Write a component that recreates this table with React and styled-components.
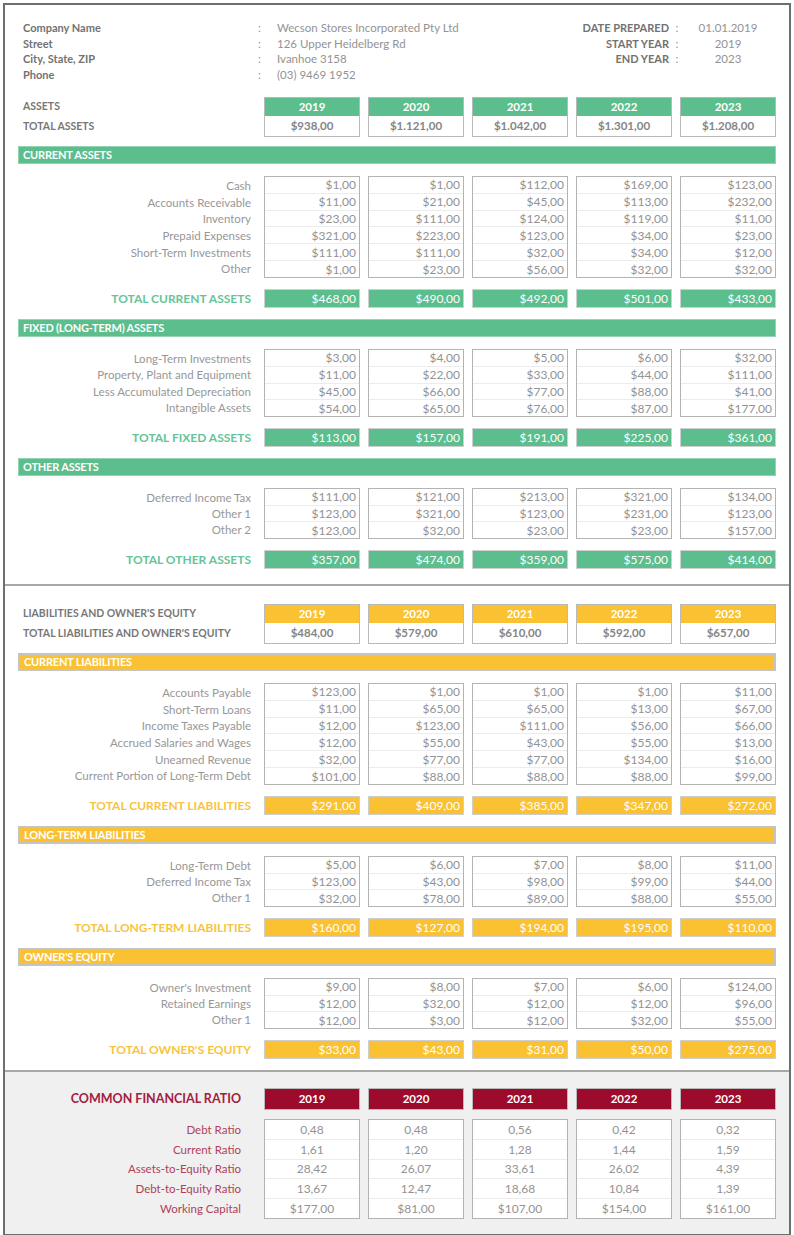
import React from 'react';
import styled, { createGlobalStyle } from 'styled-components';

const GlobalStyle = createGlobalStyle`
  body {
    margin: 0;
    background: #fff;
  }
`;

// colour sets for each part of the sheet
const tones = {
  green: { main: '#5cbd8d', label: '#66c498', edge: '#94d3b2' },
  yellow: { main: '#fac132', label: '#f8c43f', edge: '#c4c4c4' },
  maroon: { main: '#9c0a2c', label: '#a3203f', edge: '#b9b9b9' },
};

const years = ['2019', '2020', '2021', '2022', '2023'];

const money = (n) =>
  n >= 1000 ? `$${Math.floor(n / 1000)}.${String(n % 1000).padStart(3, '0')},00` : `$${n},00`;

const assets = {
  totals: [938, 1121, 1042, 1301, 1208],
  sections: [
    {
      title: 'Current Assets',
      total: 'Total Current Assets',
      sums: [468, 490, 492, 501, 433],
      rows: [
        ['Cash', [1, 1, 112, 169, 123]],
        ['Accounts Receivable', [11, 21, 45, 113, 232]],
        ['Inventory', [23, 111, 124, 119, 11]],
        ['Prepaid Expenses', [321, 223, 123, 34, 23]],
        ['Short-Term Investments', [111, 111, 32, 34, 12]],
        ['Other', [1, 23, 56, 32, 32]],
      ],
    },
    {
      title: 'Fixed (Long-Term) Assets',
      total: 'Total Fixed Assets',
      sums: [113, 157, 191, 225, 361],
      rows: [
        ['Long-Term Investments', [3, 4, 5, 6, 32]],
        ['Property, Plant and Equipment', [11, 22, 33, 44, 111]],
        ['Less Accumulated Depreciation', [45, 66, 77, 88, 41]],
        ['Intangible Assets', [54, 65, 76, 87, 177]],
      ],
    },
    {
      title: 'Other Assets',
      total: 'Total Other Assets',
      sums: [357, 474, 359, 575, 414],
      rows: [
        ['Deferred Income Tax', [111, 121, 213, 321, 134]],
        ['Other 1', [123, 321, 123, 231, 123]],
        ['Other 2', [123, 32, 23, 23, 157]],
      ],
    },
  ],
};

const liabilities = {
  totals: [484, 579, 610, 592, 657],
  sections: [
    {
      title: 'Current Liabilities',
      total: 'Total Current Liabilities',
      sums: [291, 409, 385, 347, 272],
      rows: [
        ['Accounts Payable', [123, 1, 1, 1, 11]],
        ['Short-Term Loans', [11, 65, 65, 13, 67]],
        ['Income Taxes Payable', [12, 123, 111, 56, 66]],
        ['Accrued Salaries and Wages', [12, 55, 43, 55, 13]],
        ['Unearned Revenue', [32, 77, 77, 134, 16]],
        ['Current Portion of Long-Term Debt', [101, 88, 88, 88, 99]],
      ],
    },
    {
      title: 'Long-Term Liabilities',
      total: 'Total Long-Term Liabilities',
      sums: [160, 127, 194, 195, 110],
      rows: [
        ['Long-Term Debt', [5, 6, 7, 8, 11]],
        ['Deferred Income Tax', [123, 43, 98, 99, 44]],
        ['Other 1', [32, 78, 89, 88, 55]],
      ],
    },
    {
      title: "Owner's Equity",
      total: "Total Owner's Equity",
      sums: [33, 43, 31, 50, 275],
      rows: [
        ["Owner's Investment", [9, 8, 7, 6, 124]],
        ['Retained Earnings', [12, 32, 12, 12, 96]],
        ['Other 1', [12, 3, 12, 32, 55]],
      ],
    },
  ],
};

const ratios = [
  ['Debt Ratio', ['0,48', '0,48', '0,56', '0,42', '0,32']],
  ['Current Ratio', ['1,61', '1,20', '1,28', '1,44', '1,59']],
  ['Assets-to-Equity Ratio', ['28,42', '26,07', '33,61', '26,02', '4,39']],
  ['Debt-to-Equity Ratio', ['13,67', '12,47', '18,68', '10,84', '1,39']],
  ['Working Capital', ['$177,00', '$81,00', '$107,00', '$154,00', '$161,00']],
];

const Sheet = styled.div`
  margin: 3px;
  border: 2px solid #6e6e6e;
  font-family: Lato, 'Open Sans', sans-serif;
  font-size: 11.5px;
  color: #939393;
`;

const Panel = styled.section`
  display: flex;
  flex-direction: column;
  gap: 11px;
  padding: ${(p) => p.$pad};
  background: ${(p) => p.$bg || '#fff'};
  border-top: ${(p) => (p.$first ? 'none' : '2px solid #a8a8a8')};
`;

const Info = styled.div`
  display: flex;
  align-items: flex-start;
  justify-content: space-between;
  padding: 0 5px;
  line-height: 15.5px;
  margin-bottom: 4px;
`;

const InfoGrid = styled.div`
  display: grid;
  grid-template-columns: ${(p) => p.$cols};
`;

const InfoKey = styled.div`
  font-size: 11px;
  font-weight: 700;
  color: #727272;
  text-align: ${(p) => (p.$right ? 'right' : 'left')};
`;

const InfoColon = styled.div`
  text-align: ${(p) => (p.$center ? 'center' : 'left')};
`;

const InfoValue = styled.div`
  text-align: ${(p) => (p.$center ? 'center' : 'left')};
`;

const Row = styled.div`
  display: grid;
  grid-template-columns: 1fr repeat(5, 96px);
  column-gap: 8px;
  margin-bottom: ${(p) => p.$after || 0}px;
`;

const HeadLabels = styled.div`
  display: flex;
  flex-direction: column;
  padding-left: 5px;
  font-size: 10.5px;
  font-weight: 700;
  color: #777;
`;

const HeadLabel = styled.div`
  height: ${(p) => p.$h}px;
  line-height: ${(p) => p.$h}px;
  white-space: nowrap;
`;

const YearBox = styled.div`
  border: 1px solid #b9b9b9;
  display: flex;
  flex-direction: column;
`;

const YearHead = styled.div`
  height: ${(p) => p.$h || 18}px;
  line-height: ${(p) => p.$h || 18}px;
  background: ${(p) => tones[p.$tone].main};
  color: #fff;
  font-size: 11.5px;
  font-weight: 700;
  text-align: center;
`;

const YearTotal = styled.div`
  height: 20px;
  line-height: 20px;
  text-align: center;
  font-size: 11.5px;
  font-weight: 700;
  color: #858585;
  background: #fff;
`;

const Bar = styled.div`
  box-sizing: border-box;
  height: 18px;
  line-height: ${(p) => (p.$tone === 'yellow' ? 14 : 16)}px;
  padding-left: 4px;
  margin-bottom: 1px;
  background: ${(p) => tones[p.$tone].main};
  border: ${(p) => (p.$tone === 'yellow' ? 2 : 1)}px solid ${(p) => tones[p.$tone].edge};
  color: #fff;
  font-size: 11px;
  font-weight: 700;
  text-transform: uppercase;
  letter-spacing: -0.2px;
`;

const Labels = styled.div`
  box-sizing: border-box;
  display: flex;
  flex-direction: column;
  height: ${(p) => p.$rows * p.$rh}px;
  padding: 1px ${(p) => p.$gap}px 1px 0;
  text-align: right;
  color: ${(p) => p.$color || '#979797'};
`;

const LabelLine = styled.div`
  flex: 1;
  display: flex;
  align-items: center;
  justify-content: flex-end;
  white-space: nowrap;
`;

const ValueBox = styled.div`
  box-sizing: border-box;
  display: flex;
  flex-direction: column;
  height: ${(p) => p.$rows * p.$rh}px;
  border: 1px solid #b3b3b3;
  background: #fff;
  font-size: 12px;
`;

const ValueLine = styled.div`
  flex: 1;
  display: flex;
  align-items: center;
  justify-content: ${(p) => (p.$center ? 'center' : 'flex-end')};
  padding-right: ${(p) => (p.$center ? 0 : 3)}px;
  & + & {
    border-top: 1px solid #ececec;
  }
`;

const TotalLabel = styled.div`
  padding-right: 5px;
  text-align: right;
  line-height: 19px;
  font-size: 12px;
  font-weight: 700;
  text-transform: uppercase;
  color: ${(p) => tones[p.$tone].label};
  white-space: nowrap;
`;

const TotalCell = styled.div`
  box-sizing: border-box;
  height: 19px;
  line-height: 17px;
  padding-right: 3px;
  text-align: right;
  font-size: 12px;
  color: #fff;
  background: ${(p) => tones[p.$tone].main};
  border: 1px solid #cfcfcf;
`;

const RatioTitle = styled.div`
  padding-right: 15px;
  text-align: right;
  line-height: 22px;
  font-size: 12.5px;
  font-weight: 700;
  color: ${tones.maroon.label};
  white-space: nowrap;
`;

function DataBlock({ rows, rh = 17, gap = 5, center, color }) {
  return (
    <Row>
      <Labels $rows={rows.length} $rh={rh} $gap={gap} $color={color}>
        {rows.map(([label]) => (
          <LabelLine key={label}>{label}</LabelLine>
        ))}
      </Labels>
      {years.map((y, i) => (
        <ValueBox key={y} $rows={rows.length} $rh={rh}>
          {rows.map(([label, vals]) => (
            <ValueLine key={label} $center={center}>
              {typeof vals[i] === 'number' ? money(vals[i]) : vals[i]}
            </ValueLine>
          ))}
        </ValueBox>
      ))}
    </Row>
  );
}

function Group({ section, tone }) {
  return (
    <>
      <Bar $tone={tone}>{section.title}</Bar>
      <DataBlock rows={section.rows} />
      <Row>
        <TotalLabel $tone={tone}>{section.total}</TotalLabel>
        {section.sums.map((v, i) => (
          <TotalCell key={years[i]} $tone={tone}>
            {money(v)}
          </TotalCell>
        ))}
      </Row>
    </>
  );
}

function YearHeader({ title, totalLabel, totals, tone }) {
  return (
    <Row $after={-2}>
      <HeadLabels>
        <HeadLabel $h={19}>{title}</HeadLabel>
        <HeadLabel $h={21}>{totalLabel}</HeadLabel>
      </HeadLabels>
      {years.map((y, i) => (
        <YearBox key={y}>
          <YearHead $tone={tone}>{y}</YearHead>
          <YearTotal>{money(totals[i])}</YearTotal>
        </YearBox>
      ))}
    </Row>
  );
}

export default function App() {
  return (
    <>
      <GlobalStyle />
      <Sheet>
        <Panel $first $pad="15px 13px 15px">
          <Info>
            <InfoGrid $cols="235px 19px auto">
              <InfoKey>Company Name</InfoKey>
              <InfoColon>:</InfoColon>
              <InfoValue>Wecson Stores Incorporated Pty Ltd</InfoValue>
              <InfoKey>Street</InfoKey>
              <InfoColon>:</InfoColon>
              <InfoValue>126 Upper Heidelberg Rd</InfoValue>
              <InfoKey>City, State, ZIP</InfoKey>
              <InfoColon>:</InfoColon>
              <InfoValue>Ivanhoe 3158</InfoValue>
              <InfoKey>Phone</InfoKey>
              <InfoColon>:</InfoColon>
              <InfoValue>(03) 9469 1952</InfoValue>
            </InfoGrid>
            <InfoGrid $cols="auto 16px 86px">
              <InfoKey $right>DATE PREPARED</InfoKey>
              <InfoColon $center>:</InfoColon>
              <InfoValue $center>01.01.2019</InfoValue>
              <InfoKey $right>START YEAR</InfoKey>
              <InfoColon $center>:</InfoColon>
              <InfoValue $center>2019</InfoValue>
              <InfoKey $right>END YEAR</InfoKey>
              <InfoColon $center>:</InfoColon>
              <InfoValue $center>2023</InfoValue>
            </InfoGrid>
          </Info>
          <YearHeader title="ASSETS" totalLabel="TOTAL ASSETS" totals={assets.totals} tone="green" />
          {assets.sections.map((s) => (
            <Group key={s.title} section={s} tone="green" />
          ))}
        </Panel>

        <Panel $pad="18px 13px 11px">
          <YearHeader
            title="LIABILITIES AND OWNER'S EQUITY"
            totalLabel="TOTAL LIABILITIES AND OWNER'S EQUITY"
            totals={liabilities.totals}
            tone="yellow"
          />
          {liabilities.sections.map((s) => (
            <Group key={s.title} section={s} tone="yellow" />
          ))}
        </Panel>

        <Panel $bg="#f0f0f0" $pad="16px 13px 15px">
          <Row $after={-2}>
            <RatioTitle>COMMON FINANCIAL RATIO</RatioTitle>
            {years.map((y) => (
              <YearBox key={y}>
                <YearHead $tone="maroon" $h={20}>
                  {y}
                </YearHead>
              </YearBox>
            ))}
          </Row>
          <DataBlock rows={ratios} rh={20} gap={15} center color="#b0405a" />
        </Panel>
      </Sheet>
    </>
  );
}
